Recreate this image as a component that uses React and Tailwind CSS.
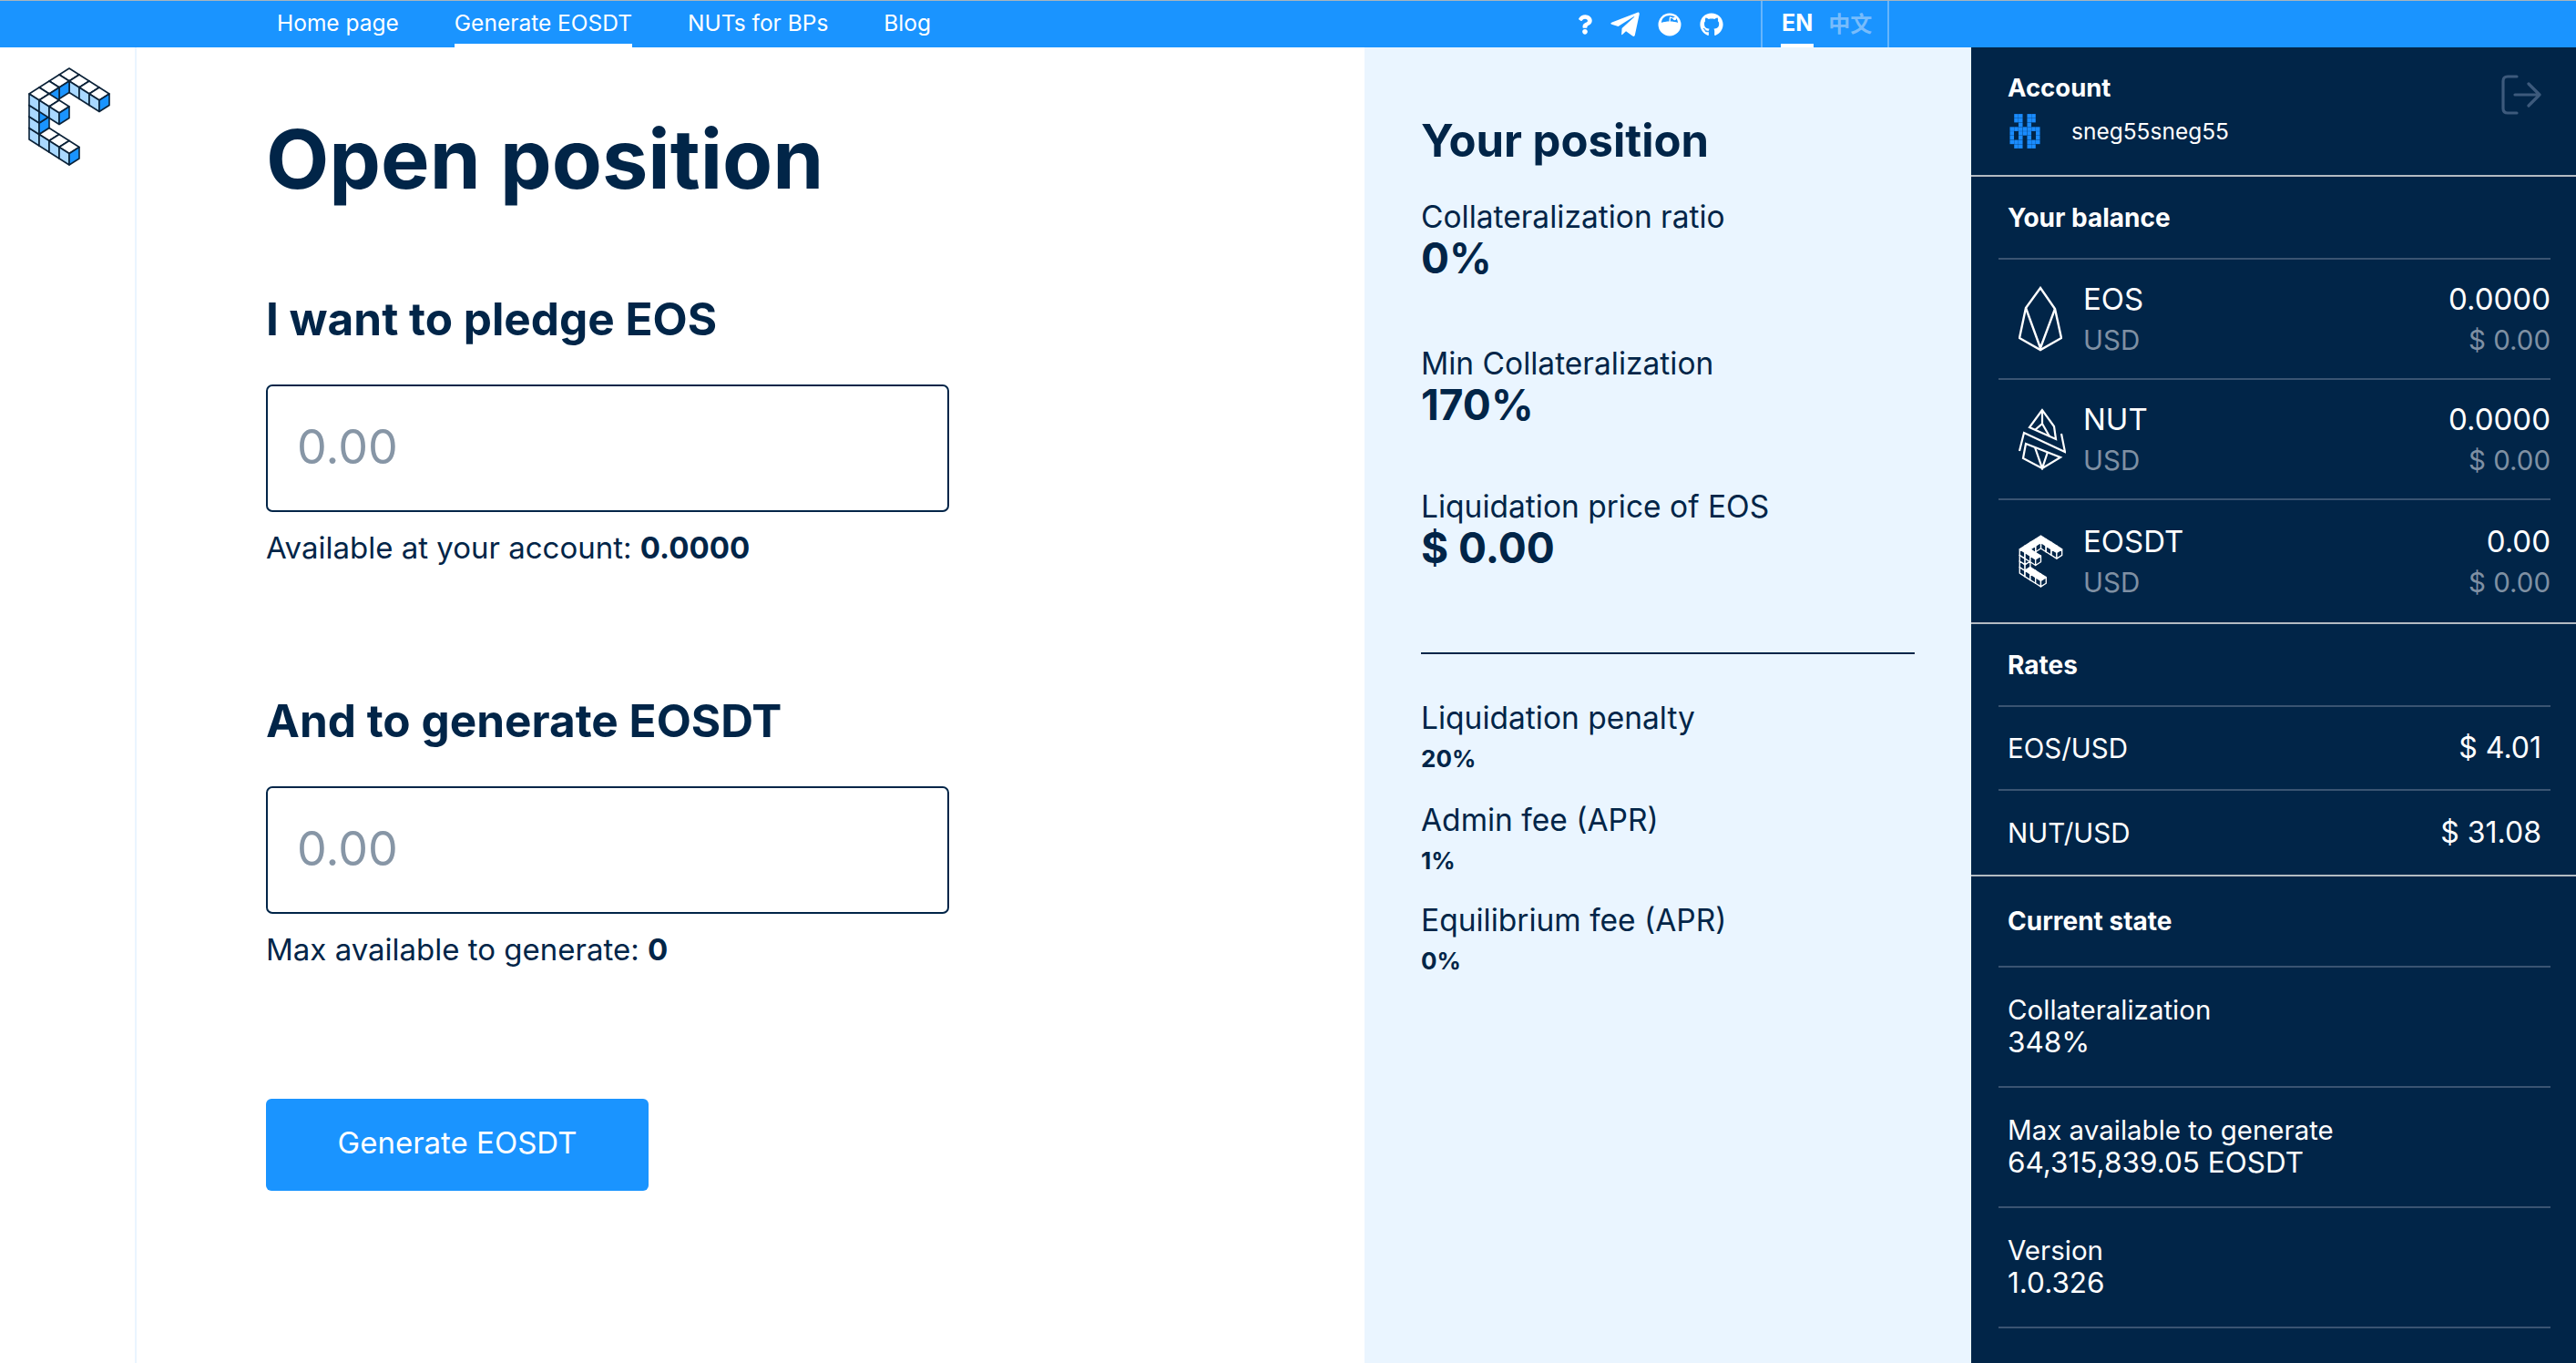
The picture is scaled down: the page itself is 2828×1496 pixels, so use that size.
import React from 'react'
import { FaQuestion, FaTelegramPlane, FaGithub } from 'react-icons/fa'

const NAV = [
  { label: 'Home page' },
  { label: 'Generate EOSDT', active: true },
  { label: 'NUTs for BPs' },
  { label: 'Blog' },
]

const CUBES = [
  [0, 0, 3], [1, 0, 3], [2, 0, 3], [3, 0, 3],
  [0, 1, 3], [0, 2, 3], [0, 3, 3],
  [0, 3, 2], [0, 3, 1], [0, 3, 0],
  [1, 3, 3], [2, 3, 3],
  [1, 3, 0], [2, 3, 0], [3, 3, 0],
].sort((p, q) => p[0] + p[1] + p[2] - (q[0] + q[1] + q[2]))

// isometric E mark, shared by the rail logo and the balance row
function CubeLogo({ className, top, left, right, stroke, strokeWidth = 1.6 }) {
  const hw = 11, hh = 7, h = 12.5
  return (
    <svg className={className} viewBox="30 73 94 110">
      {CUBES.map(([a, b, z]) => {
        const x = 76 + (a - b) * hw
        const y = 119.5 + (a + b) * hh - z * h
        return (
          <g key={`${a}-${b}-${z}`} stroke={stroke} strokeWidth={strokeWidth} strokeLinejoin="round">
            <polygon fill={top} points={`${x},${y - hh} ${x + hw},${y} ${x},${y + hh} ${x - hw},${y}`} />
            <polygon fill={left} points={`${x - hw},${y} ${x},${y + hh} ${x},${y + hh + h} ${x - hw},${y + h}`} />
            <polygon fill={right} points={`${x + hw},${y} ${x},${y + hh} ${x},${y + hh + h} ${x + hw},${y + h}`} />
          </g>
        )
      })}
    </svg>
  )
}

function EosIcon() {
  return (
    <svg className="w-[48px] h-[72px]" viewBox="0 0 48 72" fill="none" stroke="white" strokeWidth="2.4" strokeLinejoin="miter">
      <path d="M24 2 L40 25 L47 57 L24 70 L1 57 L8 24 Z" />
      <path d="M8 24 L24 68 L40 25" />
    </svg>
  )
}

function NutIcon() {
  return (
    <svg className="w-[52px] h-[68px]" viewBox="0 0 52 68" fill="none" stroke="white" strokeWidth="2.2">
      <path d="M26 2 L12 21 L41 34 L39 20 Z" />
      <path d="M26 2 L26 17 L18 24 M26 17 L34 31" />
      <path d="M1 47 L6 27 L51 48 L47 28" />
      <path d="M8 39 L5 55 L26 66 L46 54 Z" />
      <path d="M18 43 L26 66 L32 48" />
    </svg>
  )
}

function RedditBowl() {
  return (
    <svg className="w-[26px] h-[26px]" viewBox="0 0 26 26">
      <circle cx="13" cy="13" r="12.5" fill="white" />
      <path d="M4 11 C8 9 18 9 22 11 C22 6 18 3 13 3 C8 3 4 6 4 11 Z" fill="#1a94ff" />
      <path d="M13 10 L13.5 5 L18 6.5" fill="none" stroke="white" strokeWidth="1.3" />
      <circle cx="18.5" cy="6.5" r="1.8" fill="white" />
    </svg>
  )
}

const AVATAR = [
  '.XX.XX.',
  '.XX.XX.',
  '..X.X..',
  'XXXXXXX',
  'X.XXX.X',
  'X.X.X.X',
  'XXX.XXX',
  '.XX.XX.',
]

function Avatar() {
  return (
    <svg className="ml-[2px] w-[34px] h-[38px]" viewBox="0 0 70 80" fill="#1a8cff">
      {AVATAR.flatMap((row, r) => row.split('').map((c, i) => (
        c === 'X' ? <rect key={`${r}-${i}`} x={i * 10 + 0.2} y={r * 10 + 0.2} width="9.6" height="9.6" /> : null
      )))}
    </svg>
  )
}

function LogoutIcon() {
  return (
    <svg className="w-[44px] h-[44px] mt-[30px]" viewBox="0 0 44 44" fill="none" stroke="#3d5a7c" strokeWidth="3.2" strokeLinecap="round" strokeLinejoin="round">
      <path d="M17 2 H7 Q2 2 2 7 V37 Q2 42 7 42 H17" />
      <path d="M15 22 H42 M30 10 L42 22 L30 34" />
    </svg>
  )
}

function Field({ title, note, value, className }) {
  return (
    <div className={className}>
      <h2 className="h-[60px] leading-[60px] text-[49.5px] font-bold">{title}</h2>
      <input
        placeholder="0.00"
        className="block mt-[42px] w-[750px] h-[140px] border-2 border-[#012548] rounded-[7px] px-[32px] pb-[3px] text-[52px] outline-none placeholder:text-[#8796a6]"
      />
      <p className="mt-[19px] h-[40px] leading-[40px] text-[33px]">
        {note} <b className="font-bold">{value}</b>
      </p>
    </div>
  )
}

function Stat({ label, value, className }) {
  return (
    <div className={className}>
      <div className="h-[40px] leading-[40px] text-[33.5px]">{label}</div>
      <div className="mt-[2px] h-[46px] leading-[46px] text-[46px] font-bold">{value}</div>
    </div>
  )
}

function Fee({ label, value, className }) {
  return (
    <div className={className}>
      <div className="h-[40px] leading-[40px] text-[33.5px]">{label}</div>
      <div className="mt-[8px] h-[34px] leading-[34px] text-[26px] font-bold">{value}</div>
    </div>
  )
}

function BalanceRow({ icon, name, amount, last }) {
  return (
    <div className={`flex items-center pl-[22px] ${last ? 'h-[134px]' : 'h-[132px] border-b-2 border-[#3a5472]'}`}>
      <div className="w-[71px] shrink-0">{icon}</div>
      <div className="flex-1">
        <div className="flex justify-between h-[40px] leading-[40px] text-[33px] text-white"><span>{name}</span><span>{amount}</span></div>
        <div className="mt-[5px] flex justify-between h-[40px] leading-[40px] text-[29.5px] text-[#7f90a3]"><span>USD</span><span>$ 0.00</span></div>
      </div>
    </div>
  )
}

function RateRow({ pair, price, last }) {
  return (
    <div className={`flex items-center justify-between h-[92px] px-[10px] ${last ? '' : 'border-b-2 border-[#3a5472]'}`}>
      <span className="text-[29.5px] text-white">{pair}</span>
      <span className="text-[32px] text-white">{price}</span>
    </div>
  )
}

function StateRow({ label, value }) {
  return (
    <div className="h-[132px] pt-[28px] px-[10px] border-b-2 border-[#3a5472]">
      <div className="h-[36px] leading-[36px] text-[29.5px] text-white">{label}</div>
      <div className="h-[36px] leading-[36px] text-[31.5px] text-white">{value}</div>
    </div>
  )
}

export default function App() {
  return (
    <div className="h-screen flex flex-col overflow-hidden bg-white text-[#012548] font-['Inter','Noto_Sans_CJK_SC',sans-serif]">
      {/* top bar */}
      <nav className="h-[52px] shrink-0 flex bg-[#1a94ff] border-t border-[#a9b4bd] text-white">
        <div className="flex h-full pl-[304px] gap-[61px]">
          {NAV.map(n => (
            <a key={n.label} className={`h-full flex items-center text-[24.5px] ${n.active ? 'border-b-4 border-white pt-[2px]' : 'pb-[2px]'}`}>{n.label}</a>
          ))}
        </div>
        <div className="ml-auto flex items-center h-full gap-[20px]">
          <FaQuestion className="w-[16px] h-[24px]" />
          <FaTelegramPlane className="w-[36px] h-[36px] -mx-[2px]" />
          <RedditBowl />
          <FaGithub className="w-[26px] h-[26px]" />
        </div>
        <div className="ml-[41px] mr-[754px] w-[141px] h-full flex border-x-2 border-[#66b5fb] pl-[20px] gap-[16px]">
          <span className="h-full flex items-center px-[1px] pt-[2px] border-b-4 border-white text-[25px] font-bold">EN</span>
          <span className="h-full flex items-center text-[24px] font-bold text-[#78bcfb]">中文</span>
        </div>
      </nav>

      <div className="flex-1 flex min-h-0">
        {/* logo rail */}
        <aside className="w-[150px] shrink-0 border-r-2 border-[#eaf5ff] pl-[30px] pt-[21px]">
          <CubeLogo className="w-[94px] h-[110px]" top="#ffffff" left="#a9d8ff" right="#1a94ff" stroke="#0b2238" />
        </aside>

        {/* form */}
        <main className="flex-1 pl-[142px] pt-[73px]">
          <h1 className="h-[100px] leading-[100px] text-[90px] font-bold">Open position</h1>
          <Field className="mt-[95px]" title="I want to pledge EOS" note="Available at your account:" value="0.0000" />
          <Field className="mt-[140px]" title="And to generate EOSDT" note="Max available to generate:" value="0" />
          <button className="block mt-[144px] w-[420px] h-[101px] rounded-[6px] bg-[#1a94ff] text-white text-[33px] pb-[3px]">Generate EOSDT</button>
        </main>

        {/* position */}
        <section className="w-[666px] shrink-0 bg-[#eaf5ff] pl-[62px] pr-[62px] pt-[73px]">
          <h2 className="h-[60px] leading-[60px] text-[49px] font-bold">Your position</h2>
          <Stat className="mt-[33px]" label="Collateralization ratio" value="0%" />
          <Stat className="mt-[73px]" label="Min Collateralization" value="170%" />
          <Stat className="mt-[69px]" label="Liquidation price of EOS" value="$ 0.00" />
          <div className="mt-[92px] border-t-2 border-[#012548]" />
          <Fee className="mt-[50px]" label="Liquidation penalty" value="20%" />
          <Fee className="mt-[30px]" label="Admin fee (APR)" value="1%" />
          <Fee className="mt-[28px]" label="Equilibrium fee (APR)" value="0%" />
        </section>

        {/* account sidebar */}
        <aside className="w-[664px] shrink-0 bg-[#012548] text-white">
          <div className="h-[142px] border-b-2 border-[#b4bbc2] flex justify-between pl-[40px] pr-[38px]">
            <div className="pt-[26px]">
              <div className="h-[36px] leading-[36px] text-[27.5px] font-bold">Account</div>
              <div className="mt-[11px] flex items-center">
                <Avatar />
                <span className="ml-[34px] text-[24.5px]">sneg55sneg55</span>
              </div>
            </div>
            <LogoutIcon />
          </div>

          <div className="ml-[30px] mr-[28px]">
            <div className="h-[91px] flex items-center pl-[10px] text-[28px] font-bold border-b-2 border-[#3a5472]">Your balance</div>
            <BalanceRow icon={<EosIcon />} name="EOS" amount="0.0000" />
            <BalanceRow icon={<NutIcon />} name="NUT" amount="0.0000" />
            <BalanceRow
              icon={<CubeLogo className="w-[50px] h-[58px]" top="#ffffff" left="#012548" right="#012548" stroke="#ffffff" strokeWidth={2.6} />}
              name="EOSDT" amount="0.00" last
            />
          </div>
          <div className="border-t-2 border-[#b4bbc2]" />

          <div className="ml-[30px] mr-[28px]">
            <div className="h-[91px] flex items-center pl-[10px] text-[28px] font-bold border-b-2 border-[#3a5472]">Rates</div>
            <RateRow pair="EOS/USD" price="$ 4.01" />
            <RateRow pair="NUT/USD" price="$ 31.08" last />
          </div>
          <div className="border-t-2 border-[#b4bbc2]" />

          <div className="ml-[30px] mr-[28px]">
            <div className="h-[100px] flex items-center pl-[10px] text-[28px] font-bold border-b-2 border-[#3a5472]">Current state</div>
            <StateRow label="Collateralization" value="348%" />
            <StateRow label="Max available to generate" value="64,315,839.05 EOSDT" />
            <StateRow label="Version" value="1.0.326" />
          </div>
        </aside>
      </div>
    </div>
  )
}
